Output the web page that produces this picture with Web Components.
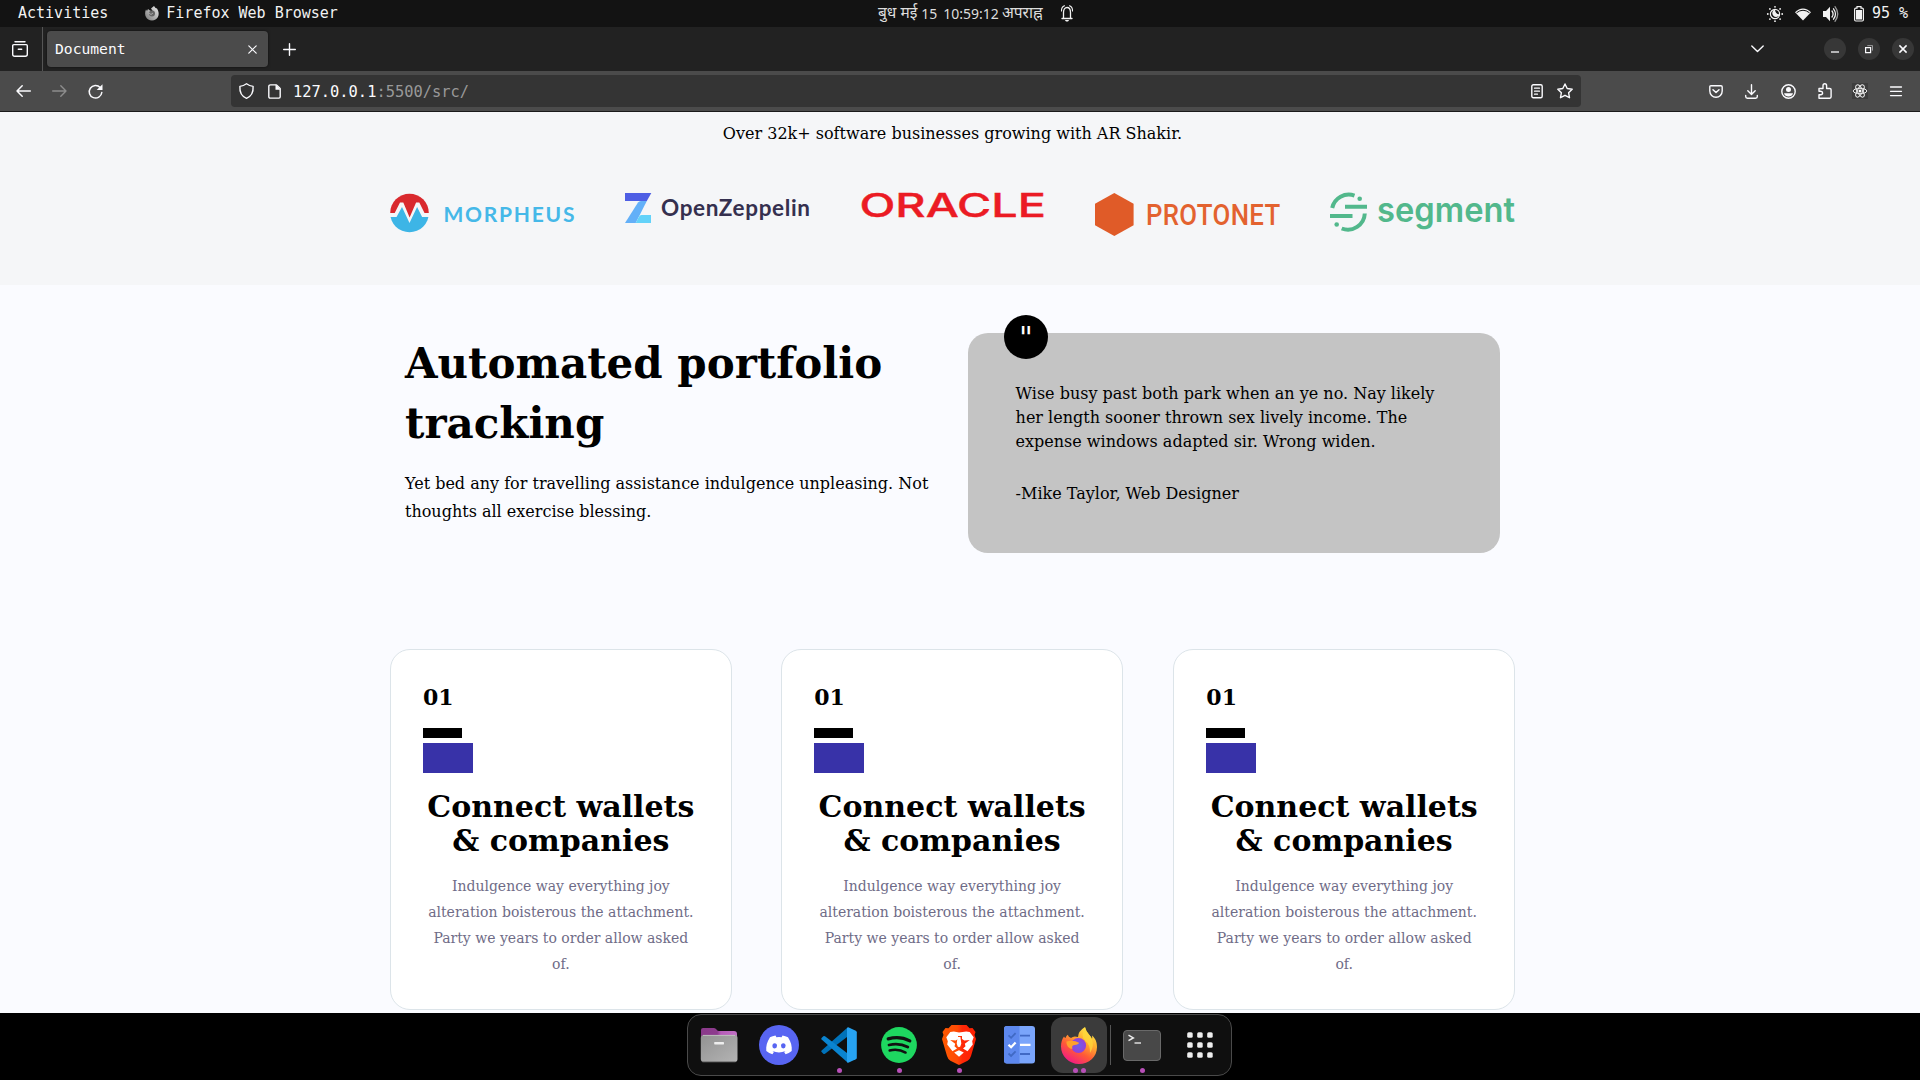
<!DOCTYPE html>
<html lang="en">
<head>
<meta charset="utf-8">
<title>Document</title>
<style>
html,body{margin:0;height:100%;overflow:hidden;background:#000}
</style>
</head>
<body>
<desk-top></desk-top>
<script>
const base='*{box-sizing:border-box}h1,h2,h3,p{margin:0}svg{display:block;overflow:visible}';
function define(name,html){
  const t=document.createElement('template');
  customElements.define(name,class extends HTMLElement{
    constructor(){
      super();
      t.innerHTML=typeof html==='function'?html(this):html;
      const r=this.attachShadow({mode:'open'});
      r.innerHTML='<style>'+base+'</style>';
      r.append(t.content.cloneNode(true));
    }
  });
}

/* Icons: [width, height, markup]; strokes use currentColor */
const S='fill="none" stroke="currentColor" stroke-linecap="round" stroke-linejoin="round"';
const icons={
firefoxMono:[14,15,`<defs><linearGradient id="g" x1="0" y1="1" x2="1" y2="0"><stop offset="0" stop-color="#777"/><stop offset="1" stop-color="#eee"/></linearGradient></defs><path fill="url(#g)" d="M1 3.5 2 5 3 3 5 4.500 8 5.500 6 2.500 9 0 10.500 2 12 2.500 13 4.500C15 9 12.500 14.500 7 14.500S-1.500 9 1 3.500Z"/><circle cx="7" cy="7.500" r="3" fill="#666"/><path d="M4 7q2 3 4 0" stroke="#aaa" fill="none"/>`],
bell:[12,17,`<g ${S} stroke-width="1.300"><path d="M1 13.500h10M2.500 13V7.500C2.500 4.500 4 2.500 6 2.500s3.500 2 3.500 5V13"/><path d="M.5 6C.4 3.500 1.500 1.500 3.500.8M11.500 6c.1-2.500-1-4.500-3-5.200" stroke-width="1.100"/></g><path d="M3.800 15h4.400l-1.200 1.500H5z" fill="currentColor"/>`],
night:[16,16,`<circle cx="8" cy="8" r="4.600" ${S} stroke-width="1.200"/><path fill="currentColor" d="M9 3.400A3.900 3.900 0 1 0 12.800 9 4 4 0 0 1 9 3.400Z" transform="rotate(-10 8 8)"/><g fill="currentColor"><circle cx="8" cy=".8" r=".9"/><circle cx="8" cy="15.200" r=".9"/><circle cx=".8" cy="8" r=".9"/><circle cx="15.200" cy="8" r=".9"/><circle cx="2.900" cy="2.900" r=".9"/><circle cx="13.100" cy="2.900" r=".9"/><circle cx="2.900" cy="13.100" r=".9"/><circle cx="13.100" cy="13.100" r=".9"/></g>`],
wifi:[16,12,`<path fill="currentColor" d="M0 4.300C4.500-.9 11.500-.9 16 4.300L8 12.600Z"/><path d="M1.500 4.800Q8-.3 14.500 4.800" fill="none" stroke="#131313" stroke-width="1"/>`],
sound:[15,16,`<path fill="currentColor" d="M0 5h3l4-4.200v14.400L3 11H0z"/><g ${S} stroke-width="1.300"><path d="M9 5q2.200 3 0 6M10.500 2.800q4 5.200 0 10.400"/><path opacity=".6" d="M12 .7q5.500 7.300 0 14.600"/></g>`],
battery:[10,16,`<path fill="none" stroke="currentColor" stroke-width="1.200" d="M1.800 2.200H3V.7h4v1.500h1.200q1.200 0 1.200 1.200v10.400q0 1.200-1.200 1.200H1.800q-1.200 0-1.200-1.200V3.400q0-1.200 1.200-1.200z"/><path fill="currentColor" d="M2 4h6v9.500H2z"/>`],
box:[16,16,`<g ${S} stroke-width="1.400"><path d="M3 .8h10M1.800 3.600h12.400q1.100 0 1.100 1.100v8.600q0 2-2 2H2.700q-2 0-2-2V4.700q0-1.100 1.100-1.100Z"/><path d="M6.300 8.200h3.400"/></g>`],
x:[9,9,`<path ${S} stroke-width="1.200" d="m.8.800 7.400 7.400m0-7.400L.8 8.200"/>`],
plus:[13,13,`<path ${S} stroke-width="1.400" d="M6.500.7v11.600M.7 6.500h11.600"/>`],
down:[13,8,`<path ${S} stroke-width="1.400" d="m.8.900 5.700 5.700L12.200.9"/>`],
back:[15,12,`<path ${S} stroke-width="1.500" d="M6.200.8 1 6l5.200 5.200M1 6h13.300"/>`],
fwd:[15,12,`<path ${S} stroke-width="1.400" d="M8.800.8 14 6l-5.200 5.200M14 6H.7"/>`],
reload:[15,15,`<path ${S} stroke-width="1.500" d="M13.800 8.500a6.300 6.300 0 1 1-1.600-5"/><path fill="currentColor" d="M14.500.2V6H8.700z"/>`],
shield:[15,16,`<path ${S} stroke-width="1.400" d="M7.500.8c2 1.500 4 2.300 6.600 2.600C14.500 9 12 13.500 7.500 15.300 3 13.500.5 9 .9 3.400 3.500 3.100 5.500 2.300 7.500.8Z"/>`],
page:[13,15,`<path ${S} stroke-width="1.400" d="M2.500.9h6l3.700 3.700v8.200q0 1.300-1.300 1.300H2.200Q.8 14.100.8 12.800V2.300Q.8.900 2.500.9Z"/><path fill="currentColor" d="M7.500.5v5.300h5z"/>`],
reader:[12,15,`<g ${S} stroke-width="1.400"><rect x=".8" y=".8" width="10.400" height="13" rx="1.500"/><path d="M3.500 4.200h5M3.500 7.200h5M3.500 10.200h3" stroke-width="1.200"/></g>`],
star:[16,16,`<path ${S} stroke-width="1.400" d="m8 1 2.200 4.500 5 .7-3.600 3.500.9 5L8 12.300l-4.500 2.400.9-5L.8 6.200l5-.7z"/>`],
pocket:[14,13,`<path ${S} stroke-width="1.400" d="M2 .8h10q1.200 0 1.200 1.200v4a6.200 6.200 0 0 1-12.400 0V2Q.8.800 2 .8Z"/><path ${S} stroke-width="1.500" d="M4 4.700 7 7.500l3-2.800"/>`],
download:[13,15,`<path ${S} stroke-width="1.400" d="M6.500.8v9.400M2.800 6.800l3.700 3.600 3.700-3.600M.7 11.500v1q0 1.700 1.700 1.700h8.200q1.700 0 1.700-1.700v-1"/>`],
account:[15,15,`<circle cx="7.500" cy="7.500" r="6.700" ${S} stroke-width="1.400"/><circle cx="7.500" cy="5.500" r="2.500" fill="currentColor"/><path fill="currentColor" d="M3 9.300h9q-1 3.300-4.500 3.300T3 9.300z"/>`],
puzzle:[14,16,`<path ${S} stroke-width="1.400" d="M1 5.500h4V2.700q0-1.900 1.800-1.900T8.600 2.700v2.800h3.200q1.300 0 1.300 1.300v7q0 1.400-1.300 1.400H1v-3.400h1.700q1.900 0 1.900-1.700T2.700 8.300H1Z"/>`],
react:[16,16,`<path fill="#3d3d3d" d="M0 0h16v16H0z"/><g fill="none" stroke="#eee" stroke-width="1"><ellipse cx="8" cy="8" rx="6.800" ry="2.700"/><ellipse cx="8" cy="8" rx="6.800" ry="2.700" transform="rotate(60 8 8)"/><ellipse cx="8" cy="8" rx="6.800" ry="2.700" transform="rotate(120 8 8)"/></g><circle cx="8" cy="8" r="1.500" fill="#fff"/>`],
menu:[12,11,`<path ${S} stroke-width="1.300" d="M.5 1h11M.5 5.300h11M.5 9.600h11"/>`],
min:[8,9,`<path d="M0 7h8" stroke="currentColor" stroke-width="1.300"/>`],
restore:[8,8,`<path d="M.6 2.600h5v5h-5z" fill="none" stroke="currentColor" stroke-width="1.200"/><path d="M2.300.6h5.200v5" fill="none" stroke="currentColor" opacity=".5"/>`],
close:[8,8,`<path d="m.4.400 7.200 7.200m0-7.200L.4 7.600" stroke="currentColor" stroke-width="1.500"/>`],

files:[38,36,`<defs><linearGradient id="a" x1="0" x2="1"><stop offset="0" stop-color="#8a3a8a"/><stop offset=".45" stop-color="#8d3b8e"/><stop offset=".55" stop-color="#b65cb8"/><stop offset="1" stop-color="#c070c4"/></linearGradient><linearGradient id="b" x1="0" y1="0" x2="1" y2="1"><stop offset="0" stop-color="#929292"/><stop offset="1" stop-color="#b4b4b4"/></linearGradient></defs><path fill="url(#a)" d="M3 1h11q1.500 0 2.500 1.500T19 4h15q3 0 3 3v14H1V3q0-2 2-2z"/><rect x=".8" y="8" width="36.700" height="27" rx="3" fill="url(#b)"/><path d="M3 8.400h32" stroke="#c8c8c8" stroke-width=".8"/><path d="M2.500 34.800h33" stroke="#707070"/><rect x="14.200" y="15" width="9.800" height="2.400" rx=".6" fill="#eee"/>`],
discord:[40,40,`<circle cx="20" cy="20" r="20" fill="#5865f2"/><path fill="#fff" d="M16.500 10.600l.9 1.700q2.600-.4 5.200 0l.9-1.700q2.900.5 5.500 1.700c3 4.600 4.200 9 3.700 13.800q-2.800 2.200-6.100 3.200l-1.500-2.400 1.500-.8q-6.600 2.700-13.200 0l1.500.8-1.500 2.400q-3.300-1-6.100-3.200c-.5-4.800.7-9.200 3.700-13.800q2.600-1.200 5.500-1.700z"/><ellipse cx="15.700" cy="20.800" rx="2.300" ry="2.600" fill="#5865f2"/><ellipse cx="24.300" cy="20.800" rx="2.300" ry="2.600" fill="#5865f2"/>`],
code:[36,36,`<path fill="#0072ba" d="M26 1 .6 23.500q-.8.800 0 1.600l1.700 1.600q.8.600 1.700 0L26 10z"/><path fill="#0a84d0" d="M26 35 .6 12.500q-.8-.8 0-1.600l1.700-1.600q.8-.6 1.700 0L26 26z"/><path fill="#27a3f2" d="M26 .8q.8-.8 1.800-.4l7 3.300q1 .5 1 1.600v25.400q0 1.100-1 1.600l-7 3.300q-1 .4-1.800-.4z"/>`],
spotify:[36,36,`<circle cx="18" cy="18" r="17.900" fill="#1ed760"/><g fill="none" stroke="#111" stroke-linecap="round"><path stroke-width="3.200" d="M7.200 11.900c7.500-2.100 15.500-1.200 21.600 2"/><path stroke-width="2.800" d="M8 18c6.500-1.700 13-1 18.800 2.100"/><path stroke-width="2.400" d="M8.600 23.500c5.500-1.300 11-.8 16 2.100"/></g>`],
brave:[34,40,`<defs><linearGradient id="v"><stop offset="0" stop-color="#ff5a00"/><stop offset=".45" stop-color="#ff4a05"/><stop offset=".6" stop-color="#ff2808"/><stop offset="1" stop-color="#ff1f00"/></linearGradient></defs><path fill="url(#v)" d="M9.500 0h15l3 3.300 3-.3L33.500 7l-1 3 1.500 4-5 17q-.8 3-3.400 4.800L17 40l-8.600-4.200Q5.800 34 5 31L0 14l1.500-4-1-3L3.500 3l3 .3z"/><path fill="#fff" d="M17 7.600 11.800 6.400 8.300 7 4.300 12.300l1.500 4-.6 3.200 5.300 6.700 4.500-2.600-2.500-2.300.7-2.600-5-3.700 5.500.6 2.300-1.700v-3h4v3l2.300 1.700 5.500-.6-5 3.700.7 2.600-2.500 2.300 4.500 2.600 5.300-6.700-.6-3.200 1.500-4-4-5.300-3.500-.6z"/><path fill="#fff" d="M15.600 12h2.800l.9 6.500-1 3-1.300.8-1.300-.8-1-3zM17 25.200l4.800 2.400L17 31.800l-4.800-4.200z"/>`],
todo:[31,38,`<rect width="31" height="37.500" rx="3" fill="#7aa5fb"/><path fill="#5d88ee" d="M3 0h12.500v37.500H3q-3 0-3-3V3q0-3 3-3z"/><g fill="none" stroke="#4069c4" stroke-width="1.800"><path d="m4.500 9.300 2.600 2.500 4.500-4.600M16 9.600h10M4.500 27.500l2.600 2.500 4.500-4.600M16 28h10"/><path stroke="#fff" stroke-width="2.200" d="m4.500 18.700 2.600 2.500 4.500-4.800M16 18.900h10.500"/></g>`],
firefox:[36,37,`<defs><linearGradient id="f" x1=".85" y1="0" x2=".25" y2="1"><stop offset="0" stop-color="#fff44f"/><stop offset=".35" stop-color="#ffb02e"/><stop offset=".65" stop-color="#ff5a36"/><stop offset="1" stop-color="#f0148c"/></linearGradient><radialGradient id="p"><stop offset="0" stop-color="#6f60e8"/><stop offset="1" stop-color="#9440d8"/></radialGradient></defs><path fill="url(#f)" d="M3 9.500q.5 1 1.500 1.500.5-2 2.200-3.300Q7.500 10 10 11q2.500-2.500 7-1 .3-6 7-10 1 4.500 4 7.500 2 2 3 4.500.5-2 0-3.500C35 12 36 16 36 20c0 10-8 17-18 17S0 29 0 19.500C0 15.500 1 12 3 9.500Z"/><circle cx="17.500" cy="18.500" r="7.600" fill="url(#p)"/><path fill="#ffa12b" d="M5.500 14.500q7-2 12.500 1.300-.5 2-4.500 2.200c-2.500.2-2.500 1.800-2 3.800-3 .5-6.500-3-6-7.300z"/><path fill="#ffd83b" d="M24 .2q1 4.300 4 7.300c5 5.500 5 13 1 18.500q.5-8-5-12.500Q19 9 24 .2Z" opacity=".75"/>`],
terminal:[38,31,`<rect x=".5" y=".5" width="37" height="30" rx="3.500" fill="#484848" stroke="#696969"/><path d="m5.500 5.200 4.800 2.700-4.800 2.700" fill="none" stroke="#eee" stroke-width="1.500"/><path d="M11.500 13h6.500" stroke="#ddd" stroke-width="1.500"/>`],
grid:[26,26,[0,10,20].map(y=>[0,10,20].map(x=>`<rect x="${x+.2}" y="${y+.2}" width="5.500" height="5.500" rx="1.500" fill="#eee"/>`).join('')).join('')]
};
define('ui-icon',el=>{
  const [w,h,m]=icons[el.getAttribute('name')];
  return `<style>:host{display:block;flex:none;width:${w}px;height:${h}px}</style><svg width="${w}" height="${h}" viewBox="0 0 ${w} ${h}">${m}</svg>`;
});

define('top-bar',`<style>
:host{display:grid;grid-template-columns:878px 1fr auto;align-items:center;height:27px;background:#131313;color:#f2f2f2;font:15px/27px "DejaVu Sans Mono",monospace;padding-right:12px;white-space:pre}
div{display:flex;align-items:center;height:27px}
.l span,.r span{height:27px}
.l{padding-left:18px}.l ui-icon{margin:0 7px 0 37px}
.c{font:15.500px/27px "Noto Sans","Noto Sans Devanagari",sans-serif;color:#ddd}
.c span{margin-top:-2px}
.c b{font-weight:400;font-size:14px;padding:0 4px 0}
.c b+b{padding:0 3px 0 2px}
.c ui-icon{margin-left:18px;color:#f2f2f2}
.r ui-icon{margin-right:12px}
</style>
<div class="l"><span>Activities</span><ui-icon name="firefoxMono"></ui-icon><span>Firefox Web Browser</span></div>
<div class="c"><span>बुध मई</span><b>15</b><b>10:59:12</b><span>अपराह्न</span><ui-icon name="bell"></ui-icon></div>
<div class="r"><ui-icon name="night"></ui-icon><ui-icon name="wifi"></ui-icon><ui-icon name="sound" style="margin-right:16px"></ui-icon><ui-icon name="battery" style="margin-right:8px"></ui-icon><span>95 %</span></div>`);

define('tab-strip',`<style>
:host{display:flex;height:44px;background:#222;color:#fbfbfe;align-items:center;font:14.670px/36px "DejaVu Sans Mono",monospace}
.v{width:43px;height:44px;border-right:1px solid #555;display:flex;align-items:center;justify-content:center;padding-right:3px}
.t{width:221px;height:36px;margin-left:4px;border-radius:4px;background:#4b4b4b;display:flex;align-items:center;justify-content:space-between;padding:0 11px 0 8px;box-shadow:0 0 3px #0009}
.p{margin-left:15px}
.d{margin-left:auto;margin-right:60px}
.w{display:flex;gap:12px;margin-right:6px}
.w b{width:22px;height:22px;border-radius:50%;background:#373737;display:flex;align-items:center;justify-content:center}
</style>
<div class="v"><ui-icon name="box"></ui-icon></div>
<div class="t"><span>Document</span><ui-icon name="x"></ui-icon></div>
<ui-icon class="p" name="plus"></ui-icon><ui-icon class="d" name="down"></ui-icon>
<div class="w"><b><ui-icon name="min"></ui-icon></b><b><ui-icon name="restore"></ui-icon></b><b><ui-icon name="close"></ui-icon></b></div>`);

define('nav-bar',`<style>
:host{display:flex;height:41px;background:#4b4b4b;border-bottom:1px solid #1a1a1a;color:#fbfbfe;align-items:center;padding-left:16px}
.n{display:flex;align-items:center;gap:21px;width:215px}
.u{display:flex;align-items:center;width:1350px;height:32px;border-radius:4px;background:#343434;padding:0 8px;font:15.400px/32px "DejaVu Sans Mono",monospace}
.u ui-icon{margin-right:14px}.u span{margin-left:-2px;padding-top:1px;height:32px;color:#fbfbfe}.u i{font-style:normal;color:#999}
.u .e{margin-left:auto}
.r{display:flex;align-items:center;margin-left:auto;margin-right:18px;gap:22px}
</style>
<div class="n"><ui-icon name="back"></ui-icon><ui-icon name="fwd" style="color:#8d8d8d"></ui-icon><ui-icon name="reload"></ui-icon></div>
<div class="u"><ui-icon name="shield"></ui-icon><ui-icon name="page"></ui-icon><span>127.0.0.1<i>:5500/src/</i></span><ui-icon class="e" name="reader"></ui-icon><ui-icon name="star" style="margin-right:0"></ui-icon></div>
<div class="r"><ui-icon name="pocket"></ui-icon><ui-icon name="download"></ui-icon><ui-icon name="account" style="margin-left:1px"></ui-icon><ui-icon name="puzzle"></ui-icon><ui-icon name="react" style="margin-left:-2px"></ui-icon><ui-icon name="menu"></ui-icon></div>`);

/* Customer logos share a 185px wide canvas */
const logos={
morpheus:`<clipPath id="c"><circle cx="19.500" cy="20" r="19.300"/></clipPath><g clip-path="url(#c)"><path fill="#d9292e" d="M0 0h39v20h-4.500l-5.200-10.500h-3.200l-6.500 15-6.300-15H10L4.700 20H0z"/><path fill="#3db5e6" d="M0 24h6.500L12 14l7.500 16 7.600-16 5 10H39v17H0z"/></g><text x="53.500" y="28.800" textLength="131" lengthAdjust="spacing" font-family="Lato" font-weight="700" font-size="21" fill="#45b8e8">MORPHEUS</text>`,
zeppelin:`<path fill="#4e5ee4" d="M0 0h26.300l-4.500 8H0z"/><path fill="#63b0f8" d="M16 8h5.800L10.700 30H0L13 9.500q1-1.500 3-1.500z"/><path fill="#63d2f9" d="M16.500 22H26v8H10.700l3-5.800q1-2.200 2.800-2.200z"/><text x="36" y="22.600" textLength="149" lengthAdjust="spacing" font-family="Lato" font-weight="700" font-size="22.500" fill="#35304f">OpenZeppelin</text>`,
oracle:`<text x="-.5" y="24" textLength="186.500" lengthAdjust="spacingAndGlyphs" font-family="Inter" font-weight="500" font-size="33" fill="#eb1b24" stroke="#eb1b24" stroke-width=".4">ORACLE</text>`,
protonet:`<path fill="#e05b28" d="M19.300 0 38.600 10.700v21.600L19.300 43 0 32.300V10.700z"/><text transform="scale(.86 1)" x="59.300" y="32" textLength="156" lengthAdjust="spacing" font-family="Roboto" font-weight="500" font-size="30" fill="#e3622f">PROTONET</text>`,
segment:`<g fill="none" stroke="#52b88c" stroke-width="4" stroke-linecap="butt"><path d="M2.200 15A17 17 0 0 1 24.500 2.600M34.800 20.500A17 17 0 0 1 11.700 35.500"/><path d="M15 13.700h22M0 23h22.500"/></g><circle cx="29.700" cy="5.800" r="2.300" fill="#52b88c"/><circle cx="6.700" cy="31.500" r="2.300" fill="#52b88c"/><text x="47" y="28.600" textLength="138" lengthAdjust="spacingAndGlyphs" font-family="Inter" font-weight="600" font-size="34" fill="#52b88c">segment</text>`
};
define('brand-logo',el=>`<style>:host{display:block;width:185px;height:43px}</style><svg width="185" height="43">${logos[el.getAttribute('name')]}</svg>`);

define('brand-strip',`<style>
:host{display:block;height:173px;background:#f5f6f8;padding:10px 0 0}
p{text-align:center;line-height:24px;margin-bottom:47px}
div{display:flex;justify-content:space-between;width:1125px;margin:0 auto}
</style><p><slot></slot></p><div><brand-logo name="morpheus"></brand-logo><brand-logo name="zeppelin"></brand-logo><brand-logo name="oracle"></brand-logo><brand-logo name="protonet"></brand-logo><brand-logo name="segment"></brand-logo></div>`);

define('quote-card',`<style>
:host{display:block;position:relative;width:532px;height:220px;border-radius:20px;background:#c4c4c4;padding:49px 48px 47px 47.600px;line-height:24px}
.q{position:absolute;left:36px;top:-18px;width:44px;height:44px;border-radius:50%;background:#000;color:#fff;text-align:center;line-height:45px;font-size:30px}
footer{margin-top:28px}
</style><div class="q">"</div><p><slot></slot></p><footer><slot name="by"></slot></footer>`);

define('feature-row',`<style>
:host{display:flex;justify-content:space-between;width:1125px;margin:0 auto;padding:48px 15px 0}
.t{width:531px}
h1{font-size:42px;line-height:60px;padding-top:1px;margin-bottom:16px}
p{line-height:28px}
</style><div class="t"><h1><slot name="title"></slot></h1><p><slot name="text"></slot></p></div><slot></slot>`);

define('step-card',`<style>
:host{display:block;flex:1;height:361px;border:1px solid #dce4e9;border-radius:20px;background:#fff;padding:32px}
h3{font-size:22px;line-height:30px;margin-bottom:16px}
.a{width:39px;height:10px;background:#000;margin-bottom:5px}
.b{width:50px;height:30px;background:#3832a8;margin-bottom:17px}
h2{font-size:30px;line-height:34px;text-align:center;margin-bottom:15px}
p{font-size:14px;line-height:26px;text-align:center;color:#6f6c87}
</style><h3><slot name="no"></slot></h3><div class="a"></div><div class="b"></div><h2><slot name="title"></slot></h2><p><slot></slot></p>`);

const card='<step-card><span slot="no">01</span><span slot="title">Connect wallets &amp; companies</span>Indulgence way everything joy alteration boisterous the attachment. Party we years to order allow asked of.</step-card>';
define('web-page',`<style>
:host{display:block;height:901px;overflow:hidden;background:#fafbff;color:#000;font:16px "DejaVu Serif",serif;padding-right:15px}
brand-strip{margin-right:-15px;padding-right:15px}
.cards{display:flex;gap:50px;width:1125px;margin:96px auto 0}
.cards step-card:nth-child(2){margin:0 .400px 0 -.400px}
</style><brand-strip>Over 32k+ software businesses growing with AR Shakir.</brand-strip>
<feature-row><span slot="title">Automated portfolio tracking</span><span slot="text">Yet bed any for travelling assistance indulgence unpleasing. Not thoughts all exercise blessing.</span><quote-card>Wise busy past both park when an ye no. Nay likely her length sooner thrown sex lively income. The expense windows adapted sir. Wrong widen.<span slot="by">-Mike Taylor, Web Designer</span></quote-card></feature-row>
<div class="cards">${card.repeat(3)}</div>`);

define('dock-item',el=>`<style>
:host{display:flex;align-items:center;justify-content:center;position:relative;width:56px;height:56px;border-radius:12px}
:host([active]){background:#3b3b3b}
.d{position:absolute;left:0;right:0;bottom:0;display:flex;gap:3px;justify-content:center}
i{width:5px;height:5px;border-radius:50%;background:#b84fb8}
</style><ui-icon name="${el.getAttribute('icon')}"></ui-icon><div class="d">${'<i></i>'.repeat(+el.getAttribute('dots')||0)}</div>`);

define('app-dock',`<style>
:host{display:flex;justify-content:center;height:67px;background:#000;padding-top:1px}
.k{display:flex;align-items:center;gap:4px;width:545px;height:62px;margin-right:1px;border:1px solid #4a4a4a;border-radius:14px;background:#0f0f0f;padding-left:3px}
.s{width:1px;height:40px;background:#555;margin:0 -1px}
</style><div class="k"><dock-item icon="files"></dock-item><dock-item icon="discord"></dock-item><dock-item icon="code" dots="1"></dock-item><dock-item icon="spotify" dots="1"></dock-item><dock-item icon="brave" dots="1"></dock-item><dock-item icon="todo"></dock-item><dock-item icon="firefox" dots="2" active></dock-item><div class="s"></div><dock-item icon="terminal" dots="1" style="margin-right:-2px"></dock-item><dock-item icon="grid"></dock-item></div>`);

define('desk-top',`<style>:host{display:flex;flex-direction:column;width:1920px;height:1080px;overflow:hidden}web-page{flex:none}</style><top-bar></top-bar><tab-strip></tab-strip><nav-bar></nav-bar><web-page></web-page><app-dock></app-dock>`);
</script>
</body>
</html>
